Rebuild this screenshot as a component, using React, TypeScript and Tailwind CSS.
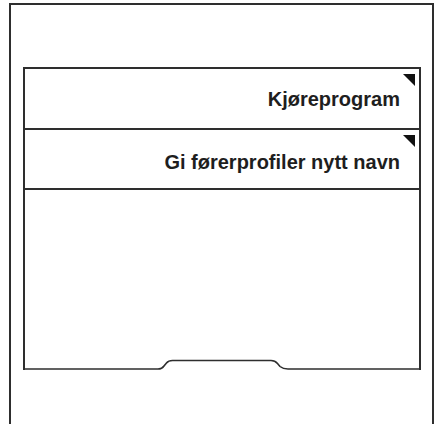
import React from "react";

function Corner() {
  return (
    <svg className="absolute top-[5px] right-[4px]" width="12" height="12" viewBox="0 0 12 12">
      <polygon points="0,0 12,0 12,12" fill="#111" />
    </svg>
  );
}

function Row({ label, h }: { label: string; h: string }) {
  return (
    <div className={`relative flex items-center justify-end border-b-2 border-[#2e2e2e] pr-[19px] ${h}`}>
      <Corner />
      <span className="text-[20px] font-bold leading-none text-[#1e1e1e]">{label}</span>
    </div>
  );
}

export default function App() {
  return (
    <div
      className="w-[438px] h-[424px] overflow-hidden bg-white pt-[3px] pl-[9px]"
      style={{ fontFamily: '"Liberation Sans", Arial, sans-serif' }}
    >
      <div className="w-[425px] h-[440px] border-x-2 border-t-2 border-[#2e2e2e] pt-[62px] pl-[12px] pr-[11px]">
        <div className="flex flex-col border-t-2 border-x-2 border-[#2e2e2e]">
          <Row label="Kjøreprogram" h="h-[61px] pt-[1px]" />
          <Row label="Gi førerprofiler nytt navn" h="h-[60px] pt-[5px]" />
          <div className="h-[168px]" />
          <svg className="block" width="394" height="12" viewBox="0 0 394 12">
            <path
              d="M-2 11 H133 Q137 11 139 8 L141.5 5 Q143.5 2.5 147.5 2.5 H246 Q250 2.5 252.5 5.5 L255 8.5 Q258 11 263 11 H396"
              fill="none"
              stroke="#2e2e2e"
              strokeWidth="1.6"
            />
          </svg>
        </div>
      </div>
    </div>
  );
}
